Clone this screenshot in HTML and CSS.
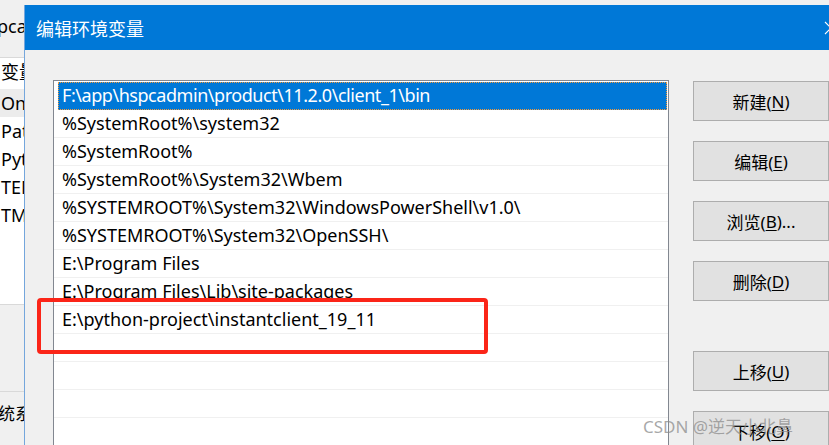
FILE: index.html
```html
<!DOCTYPE html>
<html lang="zh-CN">
<head>
<meta charset="utf-8">
<title>编辑环境变量</title>
<link rel="stylesheet" href="styles.css">
</head>
<body>
<div class="screen">
  <div class="backwin">
    <div class="bw-top"><span class="bw-title">pcadmin</span></div>
    <div class="bw-head">变量</div>
    <div class="bw-row bw-sel">OneDrive</div>
    <div class="bw-row">Path</div>
    <div class="bw-row">Python</div>
    <div class="bw-row">TEMP</div>
    <div class="bw-row">TMP</div>
    <div class="bw-fill"></div>
    <div class="bw-gray"></div>
    <div class="bw-foot">统系</div>
  </div>
  <div class="dialog">
    <div class="titlebar">
      <span class="title">编辑环境变量</span>
      <svg class="close" width="14" height="14" viewBox="0 0 14 14"><path d="M1 1 L13 13 M13 1 L1 13" stroke="#fff" stroke-width="1.1" fill="none"/></svg>
    </div>
    <div class="content">
      <div class="list">
        <div class="row selected"><div class="sel-inner">F:\app\hspcadmin\product\11.2.0\client_1\bin</div></div>
        <div class="row">%SystemRoot%\system32</div>
        <div class="row">%SystemRoot%</div>
        <div class="row">%SystemRoot%\System32\Wbem</div>
        <div class="row">%SYSTEMROOT%\System32\WindowsPowerShell\v1.0\</div>
        <div class="row">%SYSTEMROOT%\System32\OpenSSH\</div>
        <div class="row">E:\Program Files</div>
        <div class="row">E:\Program Files\Lib\site-packages</div>
        <div class="row">E:\python-project\instantclient_19_11</div>
        <div class="row"></div>
        <div class="row"></div>
        <div class="row"></div>
        <div class="row"></div>
      </div>
      <div class="buttons">
        <div class="btn">新建(<u>N</u>)</div>
        <div class="btn">编辑(<u>E</u>)</div>
        <div class="btn">浏览(<u>B</u>)...</div>
        <div class="btn">删除(<u>D</u>)</div>
        <div class="btn btn-gap">上移(<u>U</u>)</div>
        <div class="btn">下移(<u>O</u>)</div>
      </div>
    </div>
  </div>
  <div class="redbox"></div>
  <div class="watermark">CSDN @逆天小北鼻</div>
</div>
</body>
</html>
```
FILE: styles.css
```css
* { box-sizing: border-box; }
html, body { margin: 0; padding: 0; }
body {
  background: #f0f0f0;
  font-family: "Noto Sans", "Noto Sans CJK SC", sans-serif;
  color: #000;
}
.screen {
  position: relative;
  width: 829px;
  height: 445px;
  overflow: hidden;
  display: flex;
  background: #f0f0f0;
}

/* back window strip */
.backwin {
  width: 24px;
  flex: none;
  display: flex;
  flex-direction: column;
  overflow: hidden;
  white-space: nowrap;
  font-size: 18px;
}
.bw-top {
  height: 58px;
  background: #f0f0f0;
  border-bottom: 1px solid #d9d9d9;
  line-height: 52px;
}
.bw-title { margin-left: -3px; }
.bw-head {
  height: 31px;
  background: #fff;
  line-height: 28px;
  padding-left: 1px;
}
.bw-row {
  height: 28px;
  background: #fff;
  line-height: 28px;
  padding-left: 1px;
}
.bw-sel { background: #ececec; }
.bw-fill {
  height: 76px;
  background: #fff;
  border-bottom: 1px solid #d9d9d9;
}
.bw-gray {
  height: 87px;
  border-bottom: 1px solid #d9d9d9;
}
.bw-foot {
  line-height: 44px;
  font-size: 17px;
  margin-left: -2px;
}

/* dialog */
.dialog {
  flex: 1;
  margin-top: 5px;
  border-left: 1px solid #74a6dc;
  background: #f0f0f0;
  display: flex;
  flex-direction: column;
  min-width: 0;
}
.titlebar {
  height: 45px;
  flex: none;
  background: #0078d7;
  display: flex;
  align-items: center;
  justify-content: space-between;
  padding-left: 11px;
}
.title {
  color: #fff;
  font-size: 18px;
  font-family: "Noto Sans CJK SC", sans-serif;
}
.close { margin-right: -9px; }

.content {
  flex: 1;
  display: flex;
  gap: 24px;
  padding: 30px 0 0 28px;
  min-height: 0;
}
.list {
  width: 616px;
  flex: none;
  height: 380px;
  background: #fff;
  border: 1px solid #828790;
  padding-top: 1px;
  overflow: hidden;
  font-size: 18px;
}
.row {
  height: 28px;
  line-height: 27px;
  border-bottom: 1px solid #f0f0f0;
  padding-left: 8px;
  white-space: nowrap;
}
.row.selected {
  padding-left: 4px;
  padding-right: 1px;
  border-bottom: none;
}
.sel-inner {
  height: 28px;
  background: #0078d7;
  color: #fff;
  padding-left: 3px;
  border: 1px dotted #f59a3a;
  line-height: 25px;
  letter-spacing: -0.45px;
}

.buttons {
  width: 136px;
  flex: none;
  display: flex;
  flex-direction: column;
  gap: 20px;
  padding-top: 1px;
}
.btn {
  height: 40px;
  flex: none;
  background: #e1e1e1;
  border: 1px solid #adadad;
  display: flex;
  align-items: center;
  justify-content: center;
  font-size: 17px;
}
.btn u { text-underline-offset: 2px; }
.btn-gap { margin-top: 30px; }

/* overlays */
.redbox {
  position: absolute;
  left: 37px;
  top: 298px;
  width: 451px;
  height: 56px;
  border: 4px solid #fb2518;
  border-radius: 4px;
}
.watermark {
  position: absolute;
  left: 643px;
  top: 413px;
  font-size: 17px;
  color: rgba(140, 140, 140, 0.75);
  white-space: nowrap;
  font-family: "Noto Sans", "Noto Sans CJK SC", sans-serif;
}
```
